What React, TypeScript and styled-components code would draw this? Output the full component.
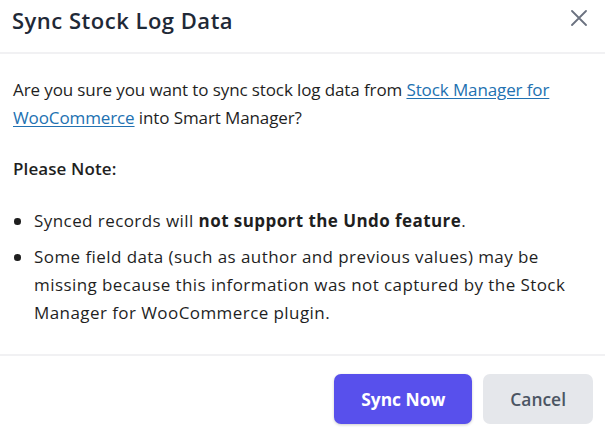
import React from "react";
import styled, { createGlobalStyle } from "styled-components";

const GlobalStyle = createGlobalStyle`
  html, body { margin: 0; padding: 0; background: #ffffff; }
  * { box-sizing: border-box; }
`;

const Dialog = styled.div`
  width: 605px;
  height: 434px;
  background: #ffffff;
  display: flex;
  flex-direction: column;
  font-family: "Open Sans", "Noto Sans", sans-serif;
  color: #1f1f1f;
`;

const Header = styled.header`
  height: 54px;
  padding: 7px 18px 0 12px;
  display: flex;
  align-items: flex-start;
  justify-content: space-between;
  border-bottom: 2px solid #f1f1f3;
`;

const Title = styled.h2`
  margin: 0;
  font-size: 22px;
  line-height: 26px;
  font-weight: 600;
  color: #1f2937;
  letter-spacing: 0.5px;
`;

const CloseButton = styled.button`
  border: none;
  background: none;
  padding: 0;
  margin-top: 3px;
  width: 16px;
  height: 16px;
  cursor: pointer;
  display: flex;
  color: #6b7280;
`;

const Body = styled.div`
  flex: 1;
  padding: 22px 12px 0 13px;
  font-size: 17px;
  line-height: 28px;
  border-bottom: 2px solid #f1f1f3;
`;

const Paragraph = styled.p`
  margin: 0 0 23px;
  letter-spacing: -0.11px;
`;

const Link = styled.a`
  color: #2271b1;
  text-decoration: underline;
  text-underline-offset: 2px;
`;

const NoteTitle = styled.p`
  margin: 0 0 24px;
  font-weight: 600;
  letter-spacing: 0.1px;
`;

const List = styled.ul`
  margin: 0;
  padding: 0 0 0 21px;
  list-style: none;
  letter-spacing: 0.43px;
`;

const Item = styled.li`
  position: relative;
  margin-bottom: 8px;
  &::before {
    content: "";
    position: absolute;
    left: -20px;
    top: 11px;
    width: 6.5px;
    height: 6.5px;
    border-radius: 50%;
    background: #1f1f1f;
  }
`;

const Footer = styled.footer`
  height: 78px;
  padding: 8px 12px 0 0;
  display: flex;
  align-items: center;
  justify-content: flex-end;
  gap: 11px;
`;

const Button = styled.button<{ $primary?: boolean }>`
  height: 50px;
  padding: 0 27px;
  border: none;
  border-radius: 7px;
  font-family: "Open Sans", "Noto Sans", sans-serif;
  font-size: 17.4px;
  font-weight: ${(p) => (p.$primary ? 700 : 600)};
  cursor: pointer;
  background: ${(p) => (p.$primary ? "#5850ec" : "#e5e7eb")};
  color: ${(p) => (p.$primary ? "#ffffff" : "#4b5563")};
  box-shadow: ${(p) => (p.$primary ? "0 1px 3px rgba(0,0,0,0.2)" : "none")};
`;

export default function App() {
  return (
    <Dialog>
      <GlobalStyle />
      <Header>
        <Title>Sync Stock Log Data</Title>
        <CloseButton aria-label="Close">
          <svg width="16" height="16" viewBox="0 0 16 16" fill="none" stroke="currentColor" strokeWidth="1.8" strokeLinecap="round">
            <path d="M1 1 L15 15 M15 1 L1 15" />
          </svg>
        </CloseButton>
      </Header>
      <Body>
        <Paragraph>
          Are you sure you want to sync stock log data from <Link href="#">Stock Manager for WooCommerce</Link> into Smart Manager?
        </Paragraph>
        <NoteTitle>Please Note:</NoteTitle>
        <List>
          <Item>
            Synced records will <strong>not support the Undo feature</strong>.
          </Item>
          <Item>
            Some field data (such as author and previous values) may be missing because this information was not captured by the Stock Manager for WooCommerce plugin.
          </Item>
        </List>
      </Body>
      <Footer>
        <Button $primary>Sync Now</Button>
        <Button>Cancel</Button>
      </Footer>
    </Dialog>
  );
}
